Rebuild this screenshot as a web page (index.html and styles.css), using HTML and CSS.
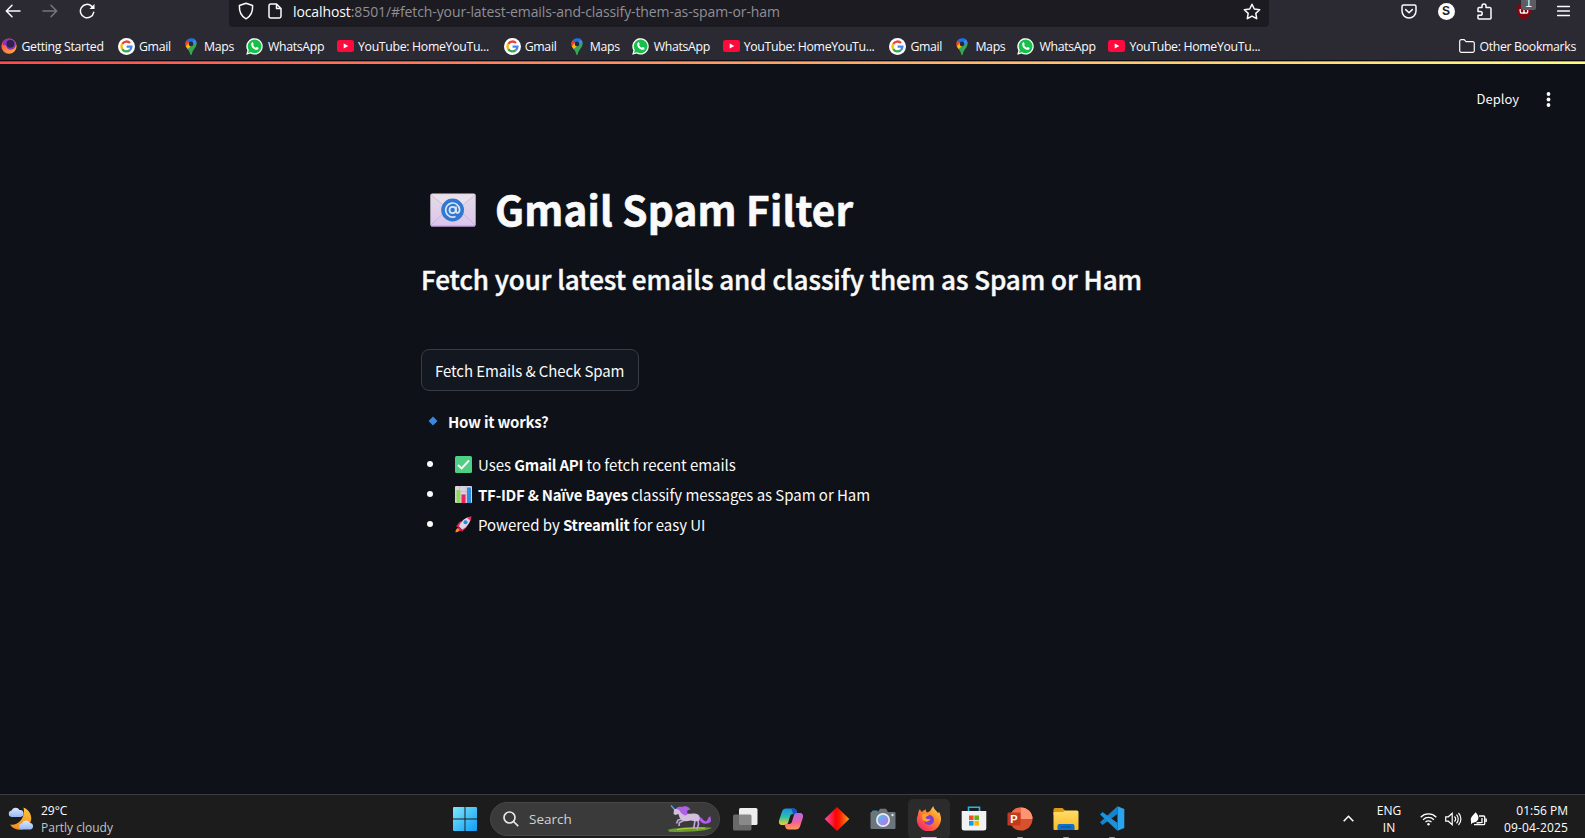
FILE: index.html
```html
<!DOCTYPE html>
<html lang="en">
<head>
<meta charset="utf-8">
<title>Gmail Spam Filter</title>
<link rel="stylesheet" href="styles.css">
</head>
<body>
<svg class="defs" aria-hidden="true">
  <defs>
    <linearGradient id="fx" x1="1" y1="0" x2="0.2" y2="1"><stop offset="0" stop-color="#ffe44d"/><stop offset=".45" stop-color="#ff8a2a"/><stop offset="1" stop-color="#f5206a"/></linearGradient>
    <linearGradient id="fx2" x1="0" y1="0" x2="1" y2="1"><stop offset="0" stop-color="#ff3750"/><stop offset="1" stop-color="#ffbd3a"/></linearGradient>
    <linearGradient id="win" x1="0" y1="0" x2="1" y2="1"><stop offset="0" stop-color="#7fe8fb"/><stop offset="1" stop-color="#0f9bf5"/></linearGradient>
    <linearGradient id="dia" x1="0" x2="1"><stop offset="0" stop-color="#ff4fb0"/><stop offset=".45" stop-color="#fb0404"/><stop offset=".6" stop-color="#fb1a04"/><stop offset="1" stop-color="#ffa412"/></linearGradient>
    <linearGradient id="lens" x1="0" y1="0" x2="1" y2="1"><stop offset="0" stop-color="#4cc4f5"/><stop offset="1" stop-color="#c46be0"/></linearGradient>
    <linearGradient id="cpa" x1="0" y1="0" x2="0" y2="1"><stop offset="0" stop-color="#1b8fe8"/><stop offset=".5" stop-color="#2cc0a8"/><stop offset="1" stop-color="#f0d02c"/></linearGradient>
    <linearGradient id="cpb" x1="0" y1="0" x2="0" y2="1"><stop offset="0" stop-color="#b568f0"/><stop offset=".55" stop-color="#f0609c"/><stop offset="1" stop-color="#ff9a4a"/></linearGradient>
    <linearGradient id="fold" x1="0" y1="0" x2="0" y2="1"><stop offset="0" stop-color="#ffdc6a"/><stop offset="1" stop-color="#fcbb22"/></linearGradient>
    <linearGradient id="env" x1="0" y1="0" x2="0" y2="1"><stop offset="0" stop-color="#e4dbe6"/><stop offset="1" stop-color="#dcc6ee"/></linearGradient>
    <linearGradient id="moon" x1="0" y1="0" x2="0" y2="1"><stop offset="0" stop-color="#ffc83c"/><stop offset="1" stop-color="#f08a1e"/></linearGradient>
    <linearGradient id="cloud" x1="0" y1="0" x2="0" y2="1"><stop offset="0" stop-color="#dbe9ff"/><stop offset="1" stop-color="#94b8f4"/></linearGradient>
    <symbol id="google" viewBox="0 0 17 17"><circle cx="8.5" cy="8.5" r="8.5" fill="#fff"/><g fill="none" stroke-width="2.3"><path d="M4.3 5.9A4.9 4.9 0 0 1 12 5" stroke="#ea4335"/><path d="M4.3 11.1A4.9 4.9 0 0 1 4.3 5.9" stroke="#fbbc05"/><path d="M11.8 12.1A4.9 4.9 0 0 1 4.3 11.1" stroke="#34a853"/><path d="M8.6 8.7h4.8A4.9 4.9 0 0 1 11.8 12.1" stroke="#4285f4"/></g></symbol>
    <symbol id="maps" viewBox="0 0 12 17"><path d="M6 .2A5.8 5.8 0 0 0 1.6 2.2L6 6l4.2-4.8A5.8 5.8 0 0 0 6 .2z" fill="#1a73e8"/><path d="M1.6 2.2A5.8 5.8 0 0 0 .8 8.4L6 6z" fill="#ea4335"/><path d="M10 1.5 1 8.8l1.8 2.4L11.6 5A5.8 5.8 0 0 0 10 1.5z" fill="#4285f4"/><path d="M.8 8.4 2.900 11.3 6.5 7.5 3.5 5z" fill="#fbbc04"/><path d="M11.5 4.3C12.3 9.2 7.8 10.8 6.8 16.2a.8.8 0 0 1-1.6 0C4.9 13.9 3.8 12.7 2.7 11.2z" fill="#34a853"/><circle cx="6" cy="5.9" r="2.3" fill="#202a44"/></symbol>
    <symbol id="wa" viewBox="0 0 17 17"><path d="M.2 16.8 1.4 12.5A8.2 8.2 0 1 1 4.6 15.6z" fill="#fff"/><circle cx="8.6" cy="8.3" r="6.9" fill="#16c04a"/><path d="M2 15l1-3.7 2.5 2.8z" fill="#16c04a"/><path d="M5.9 4.5c.5-.4 1-.2 1.2.2l.6 1.4c0 .5-.5.8-.6 1.1.6 1.2 1.5 2 2.7 2.5.4-.1.7-.8 1.1-.8l1.6.8c.3.3 0 1.4-.6 1.8-1.2.8-3 .2-4.600-1C5.700 9.200 4.300 6.200 5.900 4.500z" fill="#fff"/></symbol>
    <symbol id="yt" viewBox="0 0 17 12"><rect width="17" height="12" rx="2.5" fill="#ff0a3c"/><path d="M6.700 3.400v5.200L11.300 6z" fill="#fff"/></symbol>
  </defs>
</svg>

<header class="browser">
  <nav class="toolbar">
    <div class="nav-buttons">
      <svg width="16" height="14" viewBox="0 0 16 14" class="ln"><path d="M15 7H1.300M7 1.300 1.300 7 7 12.700"/></svg>
      <svg width="16" height="14" viewBox="0 0 16 14" class="ln dim"><path d="M1 7h13.700M9 1.300 14.700 7 9 12.700"/></svg>
      <svg width="17" height="16" viewBox="0 0 17 16" class="ln"><path d="M14.700 9.300A6.700 6.700 0 1 1 12.600 3.100L14.500 5"/><path d="M15.500 1v5h-5z" fill="#fbfbfe" stroke="none"/></svg>
    </div>
    <div class="urlbar">
      <svg width="16" height="18" viewBox="0 0 16 18" class="ln"><path d="M8 1.200 14.600 3.500C14.900 9.500 12.700 14.400 8 16.800 3.300 14.400 1.100 9.500 1.400 3.500z"/></svg>
      <svg class="page-ico ln" width="14" height="16" viewBox="0 0 14 16"><path d="M8.500 1H2.700A1.700 1.700 0 0 0 1 2.700v10.600A1.700 1.700 0 0 0 2.700 15h8.600a1.700 1.700 0 0 0 1.700-1.700V5.500zM8.500 1v4.500H13"/></svg>
      <span class="url"><b>localhost</b>:8501/#fetch-your-latest-emails-and-classify-them-as-spam-or-ham</span>
      <svg width="18" height="17" viewBox="0 0 18 17" class="ln star"><path d="M9 1.200 11.300 6l5.400.7-3.900 3.700.9 5.300L9 13.100l-4.700 2.600.9-5.300L1.300 6.700 6.700 6z"/></svg>
    </div>
    <div class="tools">
      <svg width="16" height="15" viewBox="0 0 16 15" class="ln"><path d="M2.500 1h11A1.500 1.500 0 0 1 15 2.500V7A7 7 0 0 1 1 7V2.500A1.500 1.500 0 0 1 2.500 1zM4.700 5.600 8 8.800l3.300-3.200"/></svg>
      <span class="avatar">S</span>
      <svg class="ext ln" width="15" height="17" viewBox="0 0 15 17"><path d="M5 4.500V3a2 2 0 0 1 4 0v1.500h3.500A1.300 1.300 0 0 1 14 5.800V15a1 1 0 0 1-1 1H2a1 1 0 0 1-1-1v-2.700h2.300a1.900 1.900 0 0 0 0-3.800H1V5.800A1.300 1.300 0 0 1 2.300 4.500z"/></svg>
      <span class="ublock"><svg width="16" height="17" viewBox="0 0 16 17"><path d="M8 .5 15.400 3c.2 7-1.900 11-7.400 13.600C2.500 14 .4 10 .6 3z" fill="#800610"/><path d="M4.200 6v2.200a1.900 1.900 0 0 0 3.800 0V6.500m0 1.700a1.900 1.900 0 0 0 3.800 0c0-1.200-.4-1.900-1.300-2.200" fill="none" stroke="#fff" stroke-width="1.300"/></svg><i>1</i></span>
      <svg class="menu ln" width="13" height="12" viewBox="0 0 13 12"><path d="M.5 1.500h12M.5 6h12M.5 10.500h12"/></svg>
    </div>
  </nav>
  <div class="bookmarks">
    <div class="bm started"><svg width="16" height="16" viewBox="0 0 16 16"><circle cx="8" cy="8.200" r="7.600" fill="url(#fx2)"/><path d="M1.500 4C4 0 10 0 13 2.500c3 3 2 6.500-.5 8.500-4 2-7 0-7.500-3.500L2 7z" fill="#8a35b8"/><circle cx="9.400" cy="5.800" r="3.900" fill="#2b2250"/></svg><span>Getting Started</span></div>
    <div class="group">
      <div class="bm gm"><svg width="17" height="17"><use href="#google"/></svg><span>Gmail</span></div>
      <div class="bm mp"><svg width="12" height="17"><use href="#maps"/></svg><span>Maps</span></div>
      <div class="bm wa"><svg width="17" height="17"><use href="#wa"/></svg><span>WhatsApp</span></div>
      <div class="bm yt"><svg width="17" height="12"><use href="#yt"/></svg><span>YouTube: HomeYouTu...</span></div>
    </div>
    <div class="group">
      <div class="bm gm"><svg width="17" height="17"><use href="#google"/></svg><span>Gmail</span></div>
      <div class="bm mp"><svg width="12" height="17"><use href="#maps"/></svg><span>Maps</span></div>
      <div class="bm wa"><svg width="17" height="17"><use href="#wa"/></svg><span>WhatsApp</span></div>
      <div class="bm yt"><svg width="17" height="12"><use href="#yt"/></svg><span>YouTube: HomeYouTu...</span></div>
    </div>
    <div class="group">
      <div class="bm gm"><svg width="17" height="17"><use href="#google"/></svg><span>Gmail</span></div>
      <div class="bm mp"><svg width="12" height="17"><use href="#maps"/></svg><span>Maps</span></div>
      <div class="bm wa"><svg width="17" height="17"><use href="#wa"/></svg><span>WhatsApp</span></div>
      <div class="bm yt"><svg width="17" height="12"><use href="#yt"/></svg><span>YouTube: HomeYouTu...</span></div>
    </div>
    <div class="bm other"><svg width="16" height="14" viewBox="0 0 16 14" class="ln thin"><path d="M.700 2.200A1.500 1.500 0 0 1 2.200.700h3l1.800 2h6.800a1.500 1.500 0 0 1 1.500 1.500v7.600a1.500 1.500 0 0 1-1.500 1.500H2.200a1.500 1.500 0 0 1-1.500-1.500z"/></svg><span>Other Bookmarks</span></div>
  </div>
</header>

<main class="app">
  <div class="decoration"></div>
  <div class="app-header"><span class="deploy">Deploy</span><svg width="5" height="15" viewBox="0 0 5 15" fill="#fafafa"><circle cx="2.500" cy="2" r="1.900"/><circle cx="2.500" cy="7.500" r="1.900"/><circle cx="2.500" cy="13" r="1.900"/></svg></div>
  <section class="content">
    <h1><svg width="46" height="34" viewBox="0 0 46 34"><rect x=".3" y=".5" width="45.400" height="33" rx="2" fill="url(#env)"/><path d="M1 32 17 17M45 32 29 17" stroke="#c9b4d8" stroke-width="1"/><path d="M1 2 20 17.500q3 2 6 0L45 2" fill="#e9e0ea" stroke="#cdbfd4" stroke-width="1"/><path d="M1 33h44" stroke="#b792dc"/><circle cx="22.600" cy="17" r="11.400" fill="#3078d2"/><g fill="none" stroke="#dce6fa" stroke-width="1.700"><circle cx="22.600" cy="17" r="3.100"/><path d="M26 13.500v4.500c0 3 3.600 2.300 3.600-1.200A7 7 0 1 0 25.500 23.400"/></g></svg><span>Gmail Spam Filter</span></h1>
    <h3><span>Fetch your latest emails and classify them as Spam or Ham</span></h3>
    <button><span>Fetch Emails &amp; Check Spam</span></button>
    <p class="how"><svg width="10" height="10" viewBox="0 0 10 10"><path d="M5 .5 9.500 5 5 9.500.500 5z" fill="#3d86e0"/></svg><strong>How it works?</strong></p>
    <ul>
      <li><svg width="17" height="17" viewBox="0 0 17 17"><rect width="17" height="17" rx="1.500" fill="#4fcf83"/><path d="M3 9l3.600 3.500L14 4.500" fill="none" stroke="#f4fff8" stroke-width="1.900"/></svg><span>Uses <strong>Gmail API</strong> to fetch recent emails</span></li>
      <li><svg width="17" height="17" viewBox="0 0 17 17"><rect width="17" height="17" rx="1" fill="#dcd3e2"/><path d="M0 5.500h17M0 9h17M0 12.500h17M4.500 0v17M11 0v17" stroke="#beb2c8" stroke-width=".6"/><rect x="1.500" y="4" width="3.800" height="13" fill="#8cdc50"/><rect x="6.500" y="8.500" width="4" height="8.500" fill="#e8265c"/><rect x="12" y="1.500" width="4" height="15.500" fill="#2b8fe0"/></svg><span><strong>TF-IDF &amp; Naïve Bayes</strong> classify messages as Spam or Ham</span></li>
      <li><svg width="17" height="17" viewBox="0 0 17 17"><path d="M1 10.500 5 5.500l3 .5-2 5zM6.500 16l5-4.500.5-4-5 2z" fill="#ee2c5c"/><path d="M.5 16.500c0-3 1-4.500 3.500-4.500s1.500 3.500-3.500 4.500z" fill="#ff8a1e"/><path d="M4 10.500C6 5 10 1.500 15.500.8 16 6 12.500 11 7 13.500z" fill="#dcd4e8"/><path d="M12 1.700 16.500.2 15.600 5z" fill="#ee2c5c"/><path d="M3.600 10.500 7 14l-1.500 1-3-3z" fill="#d92258"/><circle cx="10.500" cy="6.300" r="2" fill="#2e88dc"/></svg><span>Powered by <strong>Streamlit</strong> for easy UI</span></li>
    </ul>
  </section>
</main>

<footer class="taskbar">
  <div class="weather">
    <svg width="26" height="24" viewBox="0 0 26 24"><path d="M15.500.5A11.500 11.500 0 1 1 2 17.500C9 19.500 18 12 15.500.5z" fill="url(#moon)"/><path d="M3.500 10a3.300 3.300 0 0 1 0-6.500A4.500 4.500 0 0 1 11.500 3a3.500 3.500 0 0 1 1 7z" fill="url(#cloud)"/><path d="M14 22.500a3 3 0 0 1 0-6 4.300 4.300 0 0 1 8-.5 3.300 3.300 0 0 1 .5 6.500z" fill="url(#cloud)"/></svg>
    <div class="stack"><span class="deg">29°C</span><span class="pc">Partly cloudy</span></div>
  </div>
  <svg class="start" width="24" height="24" viewBox="0 0 24 24" fill="url(#win)"><path d="M1 0h10.500v11.500H0V1a1 1 0 0 1 1-1zM12.500 0H23a1 1 0 0 1 1 1v10.500H12.500zM0 12.500h11.500V24H1a1 1 0 0 1-1-1zM12.500 12.500H24V23a1 1 0 0 1-1 1H12.500z"/></svg>
  <div class="search">
    <svg width="16" height="16" viewBox="0 0 16 16" fill="none" stroke="#e6e6e6" stroke-width="1.700"><circle cx="6.500" cy="6.500" r="5.500"/><path d="M10.500 10.500 15.200 15.200"/></svg>
    <span>Search</span>
    <svg class="unicorn" width="46" height="28" viewBox="0 0 46 28">
      <path d="M1 24.700C12 22.300 32 21.800 45 22.800 40 26 24 27.500 2 26.700z" fill="#6c9c2c"/><path d="M10 24.600c8-1.500 20-2 28-1.500" stroke="#b4d44c" fill="none"/>
      <path d="M32 12.500c3-1.500 4.500 5 7.500 3.500 2-1.500 1-4.500 4.500-4.500-1.500 2 2 4.500-2 6.500-5 2-8-.5-10-3z" fill="#b45af0"/>
      <path d="M4 .500 8 5" stroke="#4aa8e0" stroke-width="1.400"/>
      <g fill="none" stroke="#c3a2d8" stroke-width="1.700" stroke-linejoin="round"><path d="M16 14l-5 1-1.500 3.500M18 15l-5.500 2.500-.5 3.500M28 15l-.5 4-1 5M31 15l.5 4-1.500 5.500"/></g>
      <path d="M7 4.500c2-1.500 5-1 6 1 1 2 3 3 6 3.300 4 .2 9-1 12 .7 2.500 1.500 2 5.500.5 6.500-3 1-5-.5-8-.5-3 .8-7 1.200-9-.5-2-1.500-2.500-4-3-6L8.500 10 6.500 9z" fill="#d3bede"/>
      <path d="M9 4C11 .5 15 2.500 16.500 1.500c3-.8 6 .5 7 3.500-1.500-.5-3 0-3.500 2 1 1 .5 2.500-1 3.500-3-.5-5-2-6-4.500C12 4.500 10.500 4 9 4z" fill="#b060e4"/>
    </svg>
  </div>
  <div class="apps">
    <div class="app-ico"><svg width="26" height="24" viewBox="0 0 26 24"><rect x="7" y="1" width="18.500" height="17" rx="1.500" fill="#eeeeee"/><rect x="1" y="7.500" width="18.500" height="16" rx="1.500" fill="#777" fill-opacity=".85"/></svg></div>
    <div class="app-ico"><svg width="26" height="24" viewBox="0 0 26 24"><path d="M8 1.500h7.500c2 0 2.800 1.200 3.300 3L19.500 7H15c-2 0-2.600 1-3.200 3l-1.600 5.500C9.600 17.200 8.800 18 7 18H4c-3 0-3.500-2.500-2.800-5L4 4.500C4.700 2.500 6 1.500 8 1.500z" fill="url(#cpa)"/><path d="M18 22.500h-7.500c-2 0-2.800-1.200-3.300-3L6.500 17H11c2 0 2.600-1 3.200-3l1.600-5.500C16.400 6.800 17.200 6 19 6h3c3 0 3.500 2.500 2.800 5L22 19.500c-.7 2-2 3-4 3z" fill="url(#cpb)"/><path d="M13 1.500h2.500c2 0 2.800 1.200 3.300 3l.4 1.500c-2 0-3 .8-3.500 2.500L15 7c-.5-2-1-4-2-5.500z" fill="#1b50c8"/></svg></div>
    <div class="app-ico"><svg width="26" height="24" viewBox="0 0 26 24"><path d="M13 0 25.300 12 13 24 .7 12z" fill="url(#dia)"/></svg></div>
    <div class="app-ico"><svg width="26" height="22" viewBox="0 0 26 22"><rect x="2" y="2.500" width="6" height="5" rx="1" fill="#1f93d6"/><path d="M8 4l2-3.200h6L18 4h6.500a1 1 0 0 1 1 1v15a1 1 0 0 1-1 1h-23a1 1 0 0 1-1-1V5a1 1 0 0 1 1-1z" fill="#6c757c"/><circle cx="13" cy="12" r="7" fill="#e8ecf0"/><circle cx="13" cy="12" r="5.300" fill="url(#lens)"/><circle cx="22.500" cy="7" r="1.200" fill="#dce2e6"/></svg></div>
    <div class="app-ico active"><svg width="26" height="25" viewBox="0 0 26 25"><path d="M2 9C2 6 3.500 3.500 4 3c.5 1.500 1 2.500 2 3C7 4.500 9 3.500 10 3.500c-.5 1 0 2 1 3 2-.5 3-1 4-3S17 .5 17.500.2c0 3 3 4 4.500 7l1-1.500c2 4 3 8 1 12A12 12 0 0 1 1 16C.5 13 1 11 2 9z" fill="url(#fx)"/><circle cx="13" cy="14" r="5" fill="#7a3fd6"/><path d="M6 9c2-2 5-1.500 7 .5-1 .5-3 .5-3.500 2 1 2 4 2 5 1-1 4-6 4-8 1z" fill="#ffa030"/></svg></div>
    <div class="app-ico"><svg width="26" height="25" viewBox="0 0 26 25"><path d="M7.500 5V1.200h11V5" fill="none" stroke="#2ab4e6" stroke-width="1.600"/><path d="M.7 5h24.600v17a2.500 2.500 0 0 1-2.500 2.500H3.200A2.500 2.500 0 0 1 .7 22z" fill="#f2f2f4"/><path d="M8 9.500h4.600v4.600H8z" fill="#f25022"/><path d="M13.400 9.500H18v4.600h-4.600z" fill="#6cb010"/><path d="M8 15h4.600v4.600H8z" fill="#0aa0ea"/><path d="M13.400 15H18v4.600h-4.600z" fill="#fdb40a"/></svg></div>
    <div class="app-ico run"><svg width="26" height="24" viewBox="0 0 26 24"><circle cx="14" cy="12" r="11.500" fill="#d9502c"/><path d="M14 .5a11.500 11.500 0 0 0-11.500 11.500H14z" fill="#ee6c48"/><path d="M14 .5A11.500 11.500 0 0 1 25.500 12H14z" fill="#ff9472"/><rect x=".5" y="5.500" width="13" height="13" rx="1.300" fill="#c23a1c"/><text x="3.200" y="15.800" class="ppt">P</text></svg></div>
    <div class="app-ico run"><svg width="26" height="24" viewBox="0 0 26 24"><path d="M.5 2.500A1.500 1.500 0 0 1 2 1h7.500L12 3.500V8H.5z" fill="#dc9a10"/><path d="M.5 5h9.500l2-1.500h12a1.500 1.500 0 0 1 1.500 1.500v17a1 1 0 0 1-1 1h-23a1 1 0 0 1-1-1z" fill="url(#fold)"/><path d="M4.500 23v-4a2 2 0 0 1 2-2h13a2 2 0 0 1 2 2v4z" fill="#0f70c6"/><path d="M8 20h10" stroke="#0a4c92"/></svg></div>
    <div class="app-ico run"><svg width="26" height="25" viewBox="0 0 26 25"><path d="M18.500.3 25.300 3v19l-6.800 2.700z" fill="#2ba4f0"/><path d="M18.500.3 1 16.300l2.500 2.700L18.500 8z" fill="#1683cf"/><path d="M18.500 24.700 1 8.500 3.500 6 18.500 17z" fill="#1a92de"/></svg></div>
  </div>
  <div class="tray">
    <svg class="chev" width="11" height="7" viewBox="0 0 11 7" fill="none" stroke="#fff" stroke-width="1.600"><path d="M.7 6.200 5.500 1.300l4.800 4.900"/></svg>
    <div class="stack lang"><span class="eng">ENG</span><span class="in">IN</span></div>
    <svg class="wifi" width="17" height="14" viewBox="0 0 17 14" fill="none" stroke="#fff" stroke-width="1.300"><path d="M.7 5.200a11 11 0 0 1 15.600 0M3.100 7.700a7.600 7.600 0 0 1 10.800 0M5.500 10.100a4.200 4.200 0 0 1 6 0"/><circle cx="8.500" cy="12.300" r="1.200" fill="#fff" stroke="none"/></svg>
    <svg class="vol" width="17" height="14" viewBox="0 0 17 14" fill="none" stroke="#fff" stroke-width="1.200"><path d="M.7 4.800v4.400h2.600L7.200 12.700V1.300L3.300 4.800zM9.500 4.500a3.700 3.700 0 0 1 0 5M11.500 2.700a6.200 6.200 0 0 1 0 8.600M13.500 1a8.700 8.700 0 0 1 0 12"/></svg>
    <svg class="bat" width="17" height="14" viewBox="0 0 17 14" fill="none" stroke="#fff" stroke-width="1.300"><path d="M9 4h4.700a1 1 0 0 1 1 1v6.700a1 1 0 0 1-1 1H4M16.200 6.500v3.500"/><path d="M1 9C0 5.500 3 3.500 5.500.300 9 3.500 9.500 7.500 6.500 9.500 4 11 2.500 10 1 12.500z" fill="#fff" stroke="none"/><path d="M6.500 11l5.500-.500V6" stroke-width="1.300"/></svg>
    <div class="stack clock"><span class="time">01:56 PM</span><span class="date">09-04-2025</span></div>
  </div>
</footer>
</body>
</html>
```
FILE: styles.css
```css
* { box-sizing: border-box; }
html, body { margin: 0; height: 838px; overflow: hidden; }
body { display: flex; flex-direction: column; background: #0e1117; font-family: "Open Sans", "Noto Sans", sans-serif; }
svg { display: block; flex: none; }
.defs { position: absolute; width: 0; height: 0; }
span { white-space: nowrap; }
.ln { fill: none; stroke: #fbfbfe; stroke-width: 1.5; stroke-linejoin: round; stroke-linecap: round; }
.ln.dim { stroke: #77767e; }
.ln.thin { stroke-width: 1.2; }

/* Browser chrome */
.browser { flex: none; height: 61px; background: #2b2a33; border-bottom: 1px solid #0f0e16; overflow: hidden; color: #fbfbfe; }
.toolbar { display: flex; align-items: center; height: 40px; margin-top: -9px; }
.nav-buttons { display: flex; align-items: center; gap: 21px; width: 229px; padding-left: 5px; }
.urlbar { display: flex; align-items: center; width: 1040px; height: 32px; padding: 0 8px 0 9px; border-radius: 4px; background: #1c1b22; }
.page-ico { margin-left: 14px; }
.url { margin-left: 11px; padding-top: 2px; font-size: 14px; letter-spacing: -0.1px; color: #8f8f96; line-height: 20px; }
.url b { font-weight: 400; color: #fbfbfe; }
.star { margin-left: auto; }
.tools { display: flex; align-items: center; flex: 1; padding-left: 132px; }
.avatar { width: 17px; height: 17px; margin-left: 20.5px; border-radius: 50%; background: #fff; color: #222; font: bold 12px/17px "Liberation Sans", sans-serif; text-align: center; }
.ext { margin-left: 22px; }
.ublock { position: relative; margin-left: 24.5px; }
.ublock i { position: absolute; left: 5px; top: -7px; width: 15px; height: 14px; border-radius: 2px; background: #5d5d61; font: 12px/15px "Liberation Sans", sans-serif; text-align: center; }
.menu { margin-left: 25px; }
.bookmarks { display: flex; align-items: center; height: 30px; padding: 0 9px 0 1px; font-size: 12.3px; letter-spacing: -0.32px; }
.bm { display: flex; align-items: center; flex: none; }
.bm span { padding-top: 1px; }
.started { width: 117px; gap: 4.5px; }
.group { display: flex; width: 385.7px; flex: none; }
.gm { width: 67px; gap: 4px; }
.mp { width: 61px; gap: 7px; }
.wa { width: 91px; gap: 5px; }
.yt { gap: 4px; }
.other { margin-left: auto; gap: 4px; }

/* Application page */
.app { flex: 1; font-family: "Noto Sans CJK SC", "Open Sans", sans-serif; color: #fafafa; }
.decoration { height: 3px; background: linear-gradient(90deg, #ff4b4b, #fffd80); border-top: 1px solid rgba(14, 17, 23, 0.35); }
.app-header { display: flex; align-items: center; justify-content: flex-end; gap: 27px; height: 70px; padding-right: 34px; font-size: 13px; }
.deploy { padding-bottom: 2px; }
.content { display: flex; flex-direction: column; align-items: flex-start; padding: 48px 0 0 421px; }
h1, h3, p, ul { margin: 0; padding: 0; }
h1 { display: flex; align-items: center; height: 56px; padding-left: 9px; gap: 19px; font-size: 40.5px; line-height: 56px; font-weight: 700; letter-spacing: 0.17px; -webkit-text-stroke: 0.6px #fafafa; }
h1 span { padding-bottom: 2px; }
h3 { height: 40px; margin-top: 21px; font-size: 26px; line-height: 40px; font-weight: 500; letter-spacing: -0.04px; -webkit-text-stroke: 0.45px #fafafa; }
button { width: 218px; height: 42px; margin-top: 50px; padding: 0 0 0 13px; border: 1px solid #3a3c42; border-radius: 8px; background: #131720; color: #fafafa; font: 15px/41px "Noto Sans CJK SC", sans-serif; letter-spacing: -0.1px; text-align: left; }
.how { display: flex; align-items: center; height: 30px; margin-top: 15px; padding-left: 7px; gap: 10px; font-size: 15px; }
ul { list-style: none; margin-top: 13px; font-size: 15px; letter-spacing: -0.04px; }
li { display: flex; align-items: center; height: 30px; }
li::before { content: ""; width: 6px; height: 6px; margin: 0 22px 0 6px; border-radius: 50%; background: #fafafa; }
li svg { margin-right: 6px; }
strong { font-weight: 700; letter-spacing: -0.26px; }

/* Taskbar */
.taskbar { display: flex; align-items: center; flex: none; height: 44px; padding-top: 4px; border-top: 1px solid #3c3c3e; background: #1c1c1c; color: #fff; font-size: 12px; }
.weather { display: flex; align-items: center; gap: 7px; width: 453px; padding-left: 8px; }
.stack { display: flex; flex-direction: column; line-height: 17px; }
.pc { color: #c4c4c4; }
.search { display: flex; align-items: center; width: 230px; height: 34px; margin-left: 13px; padding: 0 6px 0 12px; border-radius: 17px; border: 1px solid #474747; background: #3a3a3a; color: #d2d2d2; font-size: 13.5px; }
.search span { margin-left: 10px; }
.unicorn { margin-left: auto; }
.apps { display: flex; width: 413px; margin-left: 2px; }
.app-ico { display: flex; align-items: center; justify-content: center; position: relative; flex: 1; height: 40px; }
.active { flex: 0 0 42px; margin: 0 2px; border-radius: 5px; background: #2b2b2b; }
.run::after, .active::after { content: ""; position: absolute; bottom: 0; left: 50%; width: 6px; height: 2px; margin-left: -3px; border-radius: 2px; background: #9a9a9a; }
.active::after { width: 16px; margin-left: -8px; background: #e0a0dc; }
.ppt { font: bold 11px "Liberation Sans", sans-serif; fill: #fff; }
.tray { display: flex; align-items: center; flex: 1; }
.chev { margin-left: 208px; }
.lang { width: 24px; margin-left: 23px; align-items: center; }
.wifi { margin-left: 19px; }
.vol { margin-left: 8px; }
.bat { margin-left: 8px; }
.date { letter-spacing: 0.14px; }
.clock { margin-left: auto; padding-right: 17px; align-items: flex-end; }
```
